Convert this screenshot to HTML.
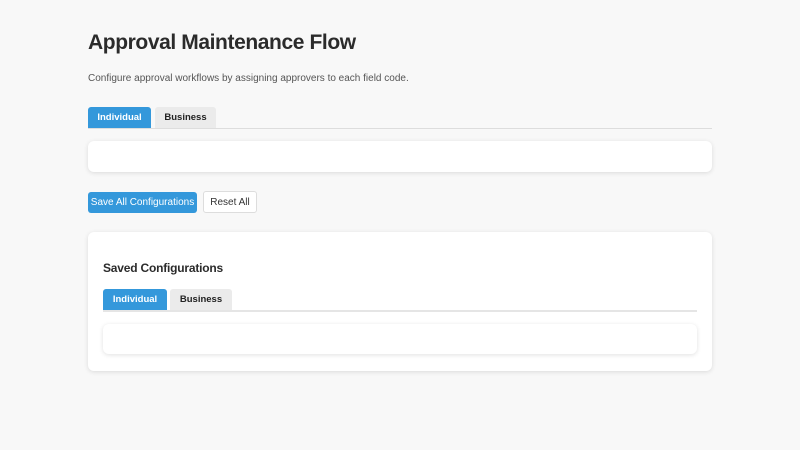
<!DOCTYPE html>
<html><head><style>
*{box-sizing:border-box;margin:0;padding:0}
body{width:800px;height:450px;background:#f8f8f8;font-family:"Liberation Sans",sans-serif;position:relative;overflow:hidden}
.a{position:absolute}
h1{position:absolute;left:88px;top:31px;font-family:"Liberation Sans",sans-serif;font-weight:bold;font-size:21px;color:#2b2b2b;letter-spacing:-0.4px}
.sub{left:88px;top:73px;font-size:10px;color:#555;white-space:nowrap}
.tab{position:absolute;height:21px;font-weight:bold;font-size:9.5px;line-height:21px;text-align:center;border-radius:3px 3px 0 0}
.on{background:#3498db;color:#fff}
.off{background:#ebebeb;color:#222}
.line{position:absolute;height:1px;background:#ddd}
.card{position:absolute;background:#fff;border-radius:6px;box-shadow:0 1px 5px rgba(0,0,0,0.12)}
.btn{position:absolute;height:21px;font-size:10px;line-height:21px;text-align:center;border-radius:3px}
h2{position:absolute;left:103px;top:261px;font-weight:bold;font-size:12px;color:#2b2b2b;letter-spacing:-0.2px}
</style></head><body>
<h1>Approval Maintenance Flow</h1>
<div class="a sub">Configure approval workflows by assigning approvers to each field code.</div>
<div class="tab on" style="left:88px;top:107px;width:63px">Individual</div>
<div class="tab off" style="left:155px;top:107px;width:61px">Business</div>
<div class="line" style="left:88px;top:128px;width:624px"></div>
<div class="card" style="left:88px;top:141px;width:624px;height:31px"></div>
<div class="btn" style="left:88px;top:192px;width:109px;background:#3498db;color:#fff">Save All Configurations</div>
<div class="btn" style="left:203px;top:191px;width:54px;height:22px;background:#fff;border:1px solid #ddd;color:#333">Reset All</div>
<div class="card" style="left:88px;top:232px;width:624px;height:139px"></div>
<h2>Saved Configurations</h2>
<div class="tab on" style="left:103px;top:289px;width:64px">Individual</div>
<div class="tab off" style="left:170px;top:289px;width:62px">Business</div>
<div class="line" style="left:103px;top:310px;width:594px;height:2px;background:#e5e5e5"></div>
<div class="card" style="left:103px;top:324px;width:594px;height:30px"></div>
</body></html>
